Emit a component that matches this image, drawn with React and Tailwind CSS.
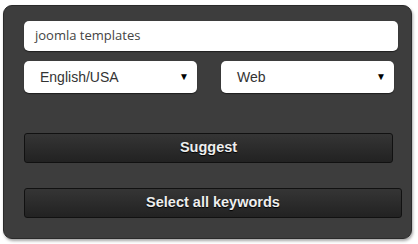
import React from "react";

const SelectBox = ({ label, width }) => (
  <div
    className={`flex items-center justify-between h-[32px] ${width} bg-white rounded-[5px] pl-[16px] pr-[8px] text-[14px] text-[#333] shadow-[0_1px_1px_rgba(0,0,0,0.5)]`}
    style={{ fontFamily: '"Liberation Sans", Arial, sans-serif' }}
  >
    <span>{label}</span>
    <span className="text-[10px] text-black leading-none">▼</span>
  </div>
);

const DarkButton = ({ children, width }) => (
  <button
    className={`block h-[30px] ${width} rounded-[3px] border border-[#111] bg-gradient-to-b from-[#353535] to-[#222] text-[14.5px] font-bold text-[#eee] [text-shadow:0_1px_1px_#000]`}
    style={{ fontFamily: '"Liberation Sans", Arial, sans-serif' }}
  >
    {children}
  </button>
);

export default function App() {
  return (
    <div className="w-[418px] h-[244px] bg-white overflow-hidden">
      <div className="ml-[3px] mt-[5px] w-[409px] h-[234px] rounded-[9px] border border-[#2a2a2a] bg-[#3d3d3d] shadow-[1px_2px_3px_rgba(0,0,0,0.35)] pl-[20px] pt-[15px]">
        <div
          className="flex items-center h-[30px] w-[374px] bg-white rounded-[5px] pl-[11px] text-[13px] text-[#444] shadow-[0_1px_1px_rgba(0,0,0,0.5)]"
          style={{ fontFamily: '"Open Sans", sans-serif' }}
        >
          joomla templates
        </div>
        <div className="flex gap-[24px] mt-[10px]">
          <SelectBox label="English/USA" width="w-[173px]" />
          <SelectBox label="Web" width="w-[173px]" />
        </div>
        <div className="mt-[40px]">
          <DarkButton width="w-[369px]">Suggest</DarkButton>
        </div>
        <div className="mt-[25px]">
          <DarkButton width="w-[378px]">Select all keywords</DarkButton>
        </div>
      </div>
    </div>
  );
}
